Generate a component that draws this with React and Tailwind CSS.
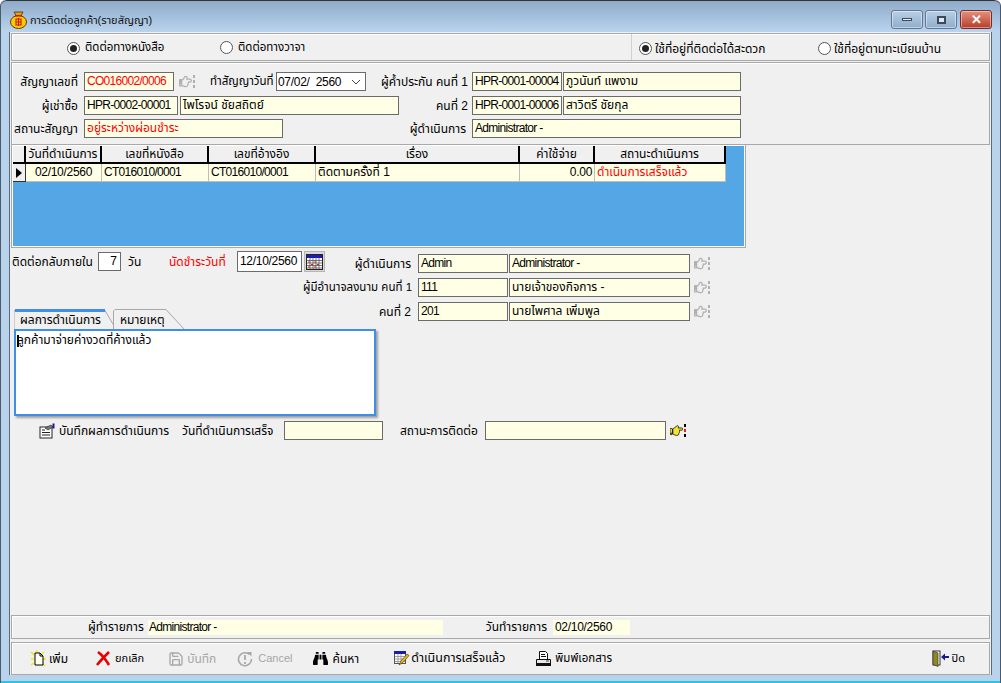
import { Save } from 'lucide-react'
import { FaBinoculars, FaRegHandPointRight, FaHandPointRight } from 'react-icons/fa'

const latinText = 'text-[12px] tracking-[-0.7px]'
const dateText = 'text-[12px] tracking-[-0.3px]'

function Field({ w, red, latin, className = '', children }) {
  return (
    <div
      className={`${w} h-[19px] shrink-0 border border-[#6b6b6b] bg-[#ffffe6] px-[2px] leading-[16px] whitespace-nowrap overflow-hidden ${
        latin ? latinText : 'text-[12px]'
      } ${red ? 'text-[#ff0000]' : 'text-black'} ${className}`}
    >
      {children}
    </div>
  )
}

function Label({ w, red, className = 'text-[12px]', children }) {
  return (
    <div className={`${w} shrink-0 text-right whitespace-nowrap ${red ? 'text-[#ff0000]' : 'text-black'} ${className}`}>
      {children}
    </div>
  )
}

function Radio({ on, className = '', children }) {
  return (
    <div className={`flex items-center whitespace-nowrap ${className}`}>
      <span className="w-[13px] h-[13px] rounded-full border border-[#555] bg-white flex items-center justify-center shrink-0">
        {on && <span className="w-[7px] h-[7px] rounded-full bg-[#222]" />}
      </span>
      {children}
    </div>
  )
}

function HandPick({ active, className = '' }) {
  return (
    <div className={`flex items-center shrink-0 ${className}`}>
      {active ? (
        <FaHandPointRight size={13} className="text-[#f2e23a] stroke-[30px] stroke-black" />
      ) : (
        <FaRegHandPointRight size={13} className="text-[#b0b0b0]" />
      )}
      <span className="flex flex-col gap-[2px] ml-[1px]">
        <i className={`block w-[2px] h-[3px] ${active ? 'bg-black' : 'bg-[#b0b0b0]'}`} />
        <i className={`block w-[2px] h-[3px] ${active ? 'bg-[#e02020]' : 'bg-[#b0b0b0]'}`} />
        <i className={`block w-[2px] h-[3px] ${active ? 'bg-black' : 'bg-[#b0b0b0]'}`} />
      </span>
    </div>
  )
}

function WinButton({ w, className = '', children }) {
  return (
    <div className={`${w} h-[19px] rounded-[3px] border border-[#5f7895] flex items-center justify-center shadow-[inset_0_0_0_1px_rgba(255,255,255,0.45)] ${className}`}>
      {children}
    </div>
  )
}

function ToolButton({ icon, disabled, gap = 'gap-[4px]', text = 'text-[12px]', className = '', children }) {
  return (
    <div className={`flex items-center ${gap} ${text} whitespace-nowrap ${disabled ? 'text-[#a6a6a6]' : 'text-black'} ${className}`}>
      {icon}
      {children}
    </div>
  )
}

function MoneyBag() {
  return (
    <svg width="17" height="18" viewBox="0 0 17 18" className="shrink-0">
      <path d="M4 1h9l-2 3.500H6z" fill="#d8a810" stroke="#5a2a00" strokeWidth="0.8" />
      <ellipse cx="8.500" cy="11" rx="8" ry="6.500" fill="#f5d000" stroke="#7a3000" />
      <rect x="5" y="4" width="7" height="1.600" fill="#c81e00" />
      <path d="M6 8h5v6H6zM8.500 7v8M5.500 11h6" fill="none" stroke="#d01800" strokeWidth="1.200" />
    </svg>
  )
}

function CalendarIcon() {
  return (
    <div className="w-[21px] h-[21px] bg-[#d8d8d8] border border-[#b5b5b5] flex items-center justify-center shrink-0 ml-[2px]">
      <svg width="17" height="16" viewBox="0 0 17 16">
        <rect x="0.500" y="0.500" width="16" height="15" fill="#fff" stroke="#222" />
        <rect x="1" y="1" width="15" height="3" fill="#1a1ac0" />
        <path d="M1 6.500h15M1 9h15M1 11.500h15M1 14h15M4 4v11M7 4v11M10 4v11M13 4v11" stroke="#555" strokeWidth="0.800" />
        <path d="M2 8h2M8 8h2M5 10.500h2M11 10.500h2M2 13h2M8 13h2" stroke="#e02020" strokeWidth="1.200" />
      </svg>
    </div>
  )
}

function NewFileIcon() {
  return (
    <svg width="17" height="17" viewBox="0 0 17 17" className="shrink-0">
      <path d="M1 2l3 3M1 9h3M1 15l3-2M7 0v3M14 2l-2 2M16 9h-3M13 14l2 2" stroke="#f5e600" strokeWidth="1.400" />
      <path d="M5 3h5l3 3v9H5z" fill="#fffff0" stroke="#000" />
      <path d="M10 3v3h3" fill="none" stroke="#000" />
    </svg>
  )
}

function RedX() {
  return (
    <svg width="15" height="15" viewBox="0 0 15 15" className="shrink-0">
      <path d="M2 1c4 3 8 8 11 13M13 1C9 5 5 9 1 14" fill="none" stroke="#e80000" strokeWidth="2.600" />
    </svg>
  )
}

function CancelIcon() {
  return (
    <svg width="16" height="16" viewBox="0 0 16 16" className="shrink-0">
      <path d="M12.500 3.500A6.500 6.500 0 1 0 14.500 8" fill="none" stroke="#a8a8a8" strokeWidth="1.600" />
      <path d="M10 1h4.500v4.500z" fill="#a8a8a8" />
      <path d="M8 4v5M8 11v2" stroke="#a8a8a8" strokeWidth="1.800" />
    </svg>
  )
}

function DoneIcon() {
  return (
    <svg width="17" height="17" viewBox="0 0 17 17" className="shrink-0">
      <rect x="1.500" y="1.500" width="11" height="12" fill="#fff" stroke="#555" />
      <rect x="1" y="1" width="12" height="3" fill="#1c1ca8" />
      <path d="M2 6.500h10M2 9h10M2 11.500h10M5 4v9M8 4v9" stroke="#8a8a8a" strokeWidth="0.800" />
      <path d="M6 15l2-4 6-7 2 1.500-6 7z" fill="#e8b820" stroke="#5a4000" strokeWidth="0.700" />
    </svg>
  )
}

function PrintIcon() {
  return (
    <svg width="17" height="17" viewBox="0 0 17 17" className="shrink-0">
      <path d="M4.500 1.500h6l2 2v6h-8z" fill="#fff" stroke="#111" />
      <path d="M6 4.500h4M6 6.500h5" stroke="#111" />
      <path d="M1.500 9.500h14v4h-14z" fill="#e8e8e8" stroke="#111" />
      <rect x="1" y="13" width="15" height="3" fill="#111" />
      <rect x="11" y="10.500" width="3" height="1" fill="#444" />
    </svg>
  )
}

function ExitIcon() {
  return (
    <svg width="18" height="17" viewBox="0 0 18 17" className="shrink-0">
      <rect x="1" y="1" width="7" height="14" fill="#fff" stroke="#333" />
      <path d="M1 1l5 2v13.500l-5-2z" fill="#8f8a20" stroke="#333" strokeWidth="0.700" />
      <path d="M17 6h-4V3.500L9 7l4 3.500V8h4z" fill="#1a1a90" />
    </svg>
  )
}

function RecordIcon() {
  return (
    <svg width="16" height="16" viewBox="0 0 16 16" className="shrink-0">
      <rect x="1" y="4" width="12" height="11" fill="#fff" stroke="#222" />
      <path d="M3 7h3M3 9.500h8M3 12h8" stroke="#222" />
      <path d="M6 5l6-3 2 2-5 3z" fill="#777" stroke="#222" strokeWidth="0.600" />
      <rect x="13.500" y="0.500" width="2" height="5" fill="#1a1a90" />
    </svg>
  )
}

const columns = [
  { w: 'w-[76px]', title: 'วันที่ดำเนินการ', value: '02/10/2560', cell: `text-center ${dateText}` },
  { w: 'w-[107px]', title: 'เลขที่หนังสือ', value: 'CT016010/0001', cell: latinText },
  { w: 'w-[107px]', title: 'เลขที่อ้างอิง', value: 'CT016010/0001', cell: latinText },
  { w: 'w-[204px]', title: 'เรื่อง', value: 'ติดตามครั้งที่ 1', cell: '' },
  { w: 'w-[75px]', title: 'ค่าใช้จ่าย', value: '0.00', cell: `text-right ${dateText}` },
  { w: 'w-[131px]', title: 'สถานะดำเนินการ', value: 'ดำเนินการเสร็จแล้ว', cell: 'text-[#ff0000]' },
]

export default function App() {
  return (
    <div className="w-[1001px] h-[683px] overflow-hidden flex flex-col font-['Liberation_Sans','Noto_Sans_Thai','Noto_Sans',sans-serif] text-[12px] text-black bg-[#b9d3ec] border-x border-[#4a5a6a] rounded-t-[6px]">
      {/* title bar */}
      <header className="h-[32px] shrink-0 flex items-start border-t border-[#333] rounded-t-[6px] bg-gradient-to-b from-[#8fabc9] to-[#bad4ee]">
        <div className="flex items-center gap-[3px] ml-[9px] mt-[10px]">
          <MoneyBag />
          <span className="text-[11px] text-[#111]">การติดต่อลูกค้า(รายสัญญา)</span>
        </div>
        <div className="ml-auto mr-[8px] mt-[9px] flex gap-[2px]">
          <WinButton w="w-[32px]" className="bg-gradient-to-b from-[#b9cfe5] to-[#8fadcc]">
            <span className="block w-[10px] h-[3px] bg-[#e8eef5] border border-[#3a4a5a]" />
          </WinButton>
          <WinButton w="w-[32px]" className="bg-gradient-to-b from-[#b9cfe5] to-[#8fadcc]">
            <span className="block w-[9px] h-[8px] bg-[#dfe8f1] border-2 border-[#3a4a5a]" />
          </WinButton>
          <WinButton w="w-[32px]" className="ml-[1px] border-[#7a2a20] bg-gradient-to-b from-[#e0917f] to-[#b83a28]">
            <span className="text-white font-bold text-[13px] leading-none">✕</span>
          </WinButton>
        </div>
      </header>

      {/* client area */}
      <main className="flex-1 min-h-0 flex flex-col mx-[8px] mb-[8px] border-l border-r border-[#5a6a7a] bg-[#f0f0f0] px-px pt-px">
        {/* contact type */}
        <div className="flex h-[28px] shrink-0 border border-[#a8a8a8] shadow-[inset_1px_1px_0_#fff]">
          <div className="w-[620px] flex items-center border-r border-[#d0d0d0] text-[11.5px]">
            <Radio on className="ml-[55px] mt-[2px]">
              <span className="ml-[5px] w-[76px]">ติดต่อทางหนังสือ</span>
            </Radio>
            <Radio className="ml-[59px] mt-[1px]">
              <span className="ml-[5px]">ติดต่อทางวาจา</span>
            </Radio>
          </div>
          <div className="flex-1 flex items-center">
            <Radio on className="ml-[7px] mt-[3px]">
              <span className="ml-[3px] w-[111px]">ใช้ที่อยู่ที่ติดต่อได้สะดวก</span>
            </Radio>
            <Radio className="ml-[52px] mt-[3px]">
              <span className="ml-[3px]">ใช้ที่อยู่ตามทะเบียนบ้าน</span>
            </Radio>
          </div>
        </div>

        {/* contract details */}
        <section className="h-[83px] shrink-0 mt-px border border-[#a8a8a8] shadow-[inset_1px_1px_0_#fff] pt-[9px] flex flex-col gap-[5px]">
          <div className="flex items-center">
            <Label w="w-[66px]">สัญญาเลขที่</Label>
            <Field w="w-[90px] ml-[6px]" red latin>CO016002/0006</Field>
            <HandPick className="ml-[5px]" />
            <Label w="w-[62px]" className="ml-[15px] text-[11.5px]">ทำสัญญาวันที่</Label>
            <div className="w-[90px] h-[19px] ml-[4px] border border-[#6b6b6b] bg-white flex items-center justify-between pl-[1px] pr-[4px] text-[12px] tracking-[-0.3px]">
              <span>07/02/&nbsp; 2560</span>
              <svg width="10" height="6" viewBox="0 0 10 6"><path d="M1 1l4 4 4-4" fill="none" stroke="#444" /></svg>
            </div>
            <Label w="w-[88px]" className="ml-[14px] text-[12px]">ผู้ค้ำประกัน คนที่ 1</Label>
            <Field w="w-[90px] ml-[4px]" latin>HPR-0001-00004</Field>
            <Field w="w-[178px] ml-px">ภูวนันท์ แพงาม</Field>
          </div>
          <div className="flex items-center">
            <Label w="w-[66px]">ผู้เช่าซื้อ</Label>
            <Field w="w-[94px] ml-[6px]" latin>HPR-0002-00001</Field>
            <Field w="w-[219px] ml-[2px]">ไพโรจน์ ชัยสถิตย์</Field>
            <Label w="w-[69px]">คนที่ 2</Label>
            <Field w="w-[90px] ml-[4px]" latin>HPR-0001-00006</Field>
            <Field w="w-[178px] ml-px">สาวิตรี ชัยกุล</Field>
          </div>
          <div className="flex items-center -mt-px">
            <Label w="w-[66px]">สถานะสัญญา</Label>
            <Field w="w-[199px] ml-[6px]" red>อยู่ระหว่างผ่อนชำระ</Field>
            <Label w="w-[183px]">ผู้ดำเนินการ</Label>
            <Field w="w-[269px] ml-[6px]" latin>Administrator -</Field>
          </div>
        </section>

        {/* follow-up grid */}
        <div className="w-[733px] h-[102px] shrink-0 ml-px border border-[#fff] outline outline-[#a8a8a8] bg-[#55a6e4]">
          <div className="flex h-[18px] bg-[#f0f0f0] w-[713px] border-b-2 border-black">
            <div className="w-[13px] border-r-2 border-black" />
            {columns.map((c) => (
              <div key={c.title} className={`${c.w} text-center border-r-2 border-black leading-[16px] whitespace-nowrap overflow-hidden`}>
                {c.title}
              </div>
            ))}
          </div>
          <div className="flex h-[18px] w-[713px]">
            <div className="w-[13px] bg-[#f0f0f0] border-r border-b border-[#333] flex items-center justify-center">
              <span className="w-0 h-0 border-y-[5px] border-y-transparent border-l-[6px] border-l-black" />
            </div>
            {columns.map((c) => (
              <div key={c.title} className={`${c.w} bg-[#ffffe6] border-r border-b border-[#bdbdbd] px-[2px] leading-[17px] whitespace-nowrap overflow-hidden ${c.cell}`}>
                {c.value}
              </div>
            ))}
          </div>
        </div>

        {/* left column and signer column share one grid cell */}
        <div className="grid shrink-0">
          <div className="col-start-1 row-start-1 flex flex-col pl-[1px]">
            <div className="flex items-center mt-[4px] h-[21px]">
              <span className="w-[79px] whitespace-nowrap">ติดต่อกลับภายใน</span>
              <div className="w-[23px] h-[19px] ml-[7px] border border-[#6b6b6b] bg-white text-right px-[3px] leading-[16px]">7</div>
              <span className="ml-[7px] w-[13px] whitespace-nowrap">วัน</span>
              <span className="ml-[28px] w-[59px] text-[#ff0000] whitespace-nowrap">นัดชำระวันที่</span>
              <div className={`w-[65px] h-[21px] ml-[9px] border border-[#6b6b6b] bg-white px-[2px] leading-[18px] ${dateText}`}>12/10/2560</div>
              <CalendarIcon />
            </div>

            {/* memo tabs */}
            <div className="mt-[37px] ml-[2px] w-[362px] flex items-end h-[20px]">
              <div className="relative w-[102px] h-[20px] pl-[6px] pt-[3px] leading-[17px] whitespace-nowrap">
                <svg className="absolute inset-0" width="102" height="20" viewBox="0 0 102 20">
                  <path d="M0 20V2L2 0H90L102 20" fill="#f0f0f0" stroke="#a8a8a8" />
                  <path d="M1 1.500H91" stroke="#3f8fe6" strokeWidth="3" />
                </svg>
                <span className="relative">ผลการดำเนินการ</span>
              </div>
              <div className="relative w-[72px] h-[20px] -ml-[3px] pl-[7px] pt-[3px] leading-[17px] whitespace-nowrap">
                <svg className="absolute inset-0" width="72" height="20" viewBox="0 0 72 20">
                  <path d="M0.500 20V2L2 0.500H53L71 20" fill="#f0f0f0" stroke="#a8a8a8" />
                </svg>
                <span className="relative">หมายเหตุ</span>
              </div>
            </div>
            <div className="ml-[2px] w-[362px] h-[87px] bg-white border-2 border-[#3f8fe6] shadow-[2px_2px_2px_#a0a0a0] px-px pt-[1px] leading-[16px]">
              <span className="inline-block w-[2px] h-[12px] -mr-[2px] bg-black align-middle" />
              ลูกค้ามาจ่ายค่างวดที่ค้างแล้ว
            </div>
          </div>

          <div className="col-start-1 row-start-1 flex flex-col items-end gap-[5px] pt-[7px] pr-[279px] pointer-events-none">
            <div className="flex items-center">
              <Label w="w-[90px]">ผู้ดำเนินการ</Label>
              <Field w="w-[90px] ml-[7px]" latin>Admin</Field>
              <Field w="w-[181px] ml-px" latin>Administrator -</Field>
              <HandPick className="ml-[4px] w-[17px]" />
            </div>
            <div className="flex items-center">
              <Label w="w-[108px]" className="text-[11.5px]">ผู้มีอำนาจลงนาม คนที่ 1</Label>
              <Field w="w-[90px] ml-[7px]" latin>111</Field>
              <Field w="w-[181px] ml-px">นายเจ้าของกิจการ -</Field>
              <HandPick className="ml-[4px] w-[17px]" />
            </div>
            <div className="flex items-center">
              <Label w="w-[40px]">คนที่ 2</Label>
              <Field w="w-[90px] ml-[7px]" latin>201</Field>
              <Field w="w-[181px] ml-px">นายไพศาล เพิ่มพูล</Field>
              <HandPick className="ml-[4px] w-[17px]" />
            </div>
          </div>
        </div>

        {/* record result */}
        <div className="flex items-center h-[19px] shrink-0 mt-[5px]">
          <div className="ml-[28px]"><RecordIcon /></div>
          <span className="ml-[4px] w-[111px] whitespace-nowrap">บันทึกผลการดำเนินการ</span>
          <span className="ml-[12px] w-[95px] whitespace-nowrap">วันที่ดำเนินการเสร็จ</span>
          <Field w="w-[99px] ml-[7px]" />
          <span className="ml-[17px] w-[75px] whitespace-nowrap">สถานะการติดต่อ</span>
          <Field w="w-[181px] ml-[10px]" />
          <HandPick active className="ml-[4px]" />
        </div>

        {/* audit strip */}
        <div className="mt-auto h-[24px] shrink-0 flex items-center border border-[#a8a8a8] shadow-[inset_1px_1px_0_#fff]">
          <Label w="w-[54px]" className="ml-[76px] text-[12px]">ผู้ทำรายการ</Label>
          <div className={`w-[295px] h-[15px] ml-[6px] bg-[#ffffe6] leading-[15px] px-px ${latinText}`}>Administrator -</div>
          <Label w="w-[63px]" className="ml-[41px] text-[12px]">วันทำรายการ</Label>
          <div className={`w-[77px] h-[15px] ml-[6px] bg-[#ffffe6] leading-[15px] px-[2px] ${dateText}`}>02/10/2560</div>
        </div>

        {/* toolbar */}
        <footer className="h-[33px] shrink-0 mt-[3px] flex items-center border border-[#a8a8a8] shadow-[inset_1px_1px_0_#fff]">
          <ToolButton icon={<NewFileIcon />} gap="gap-[2px]" className="ml-[18px]">เพิ่ม</ToolButton>
          <ToolButton icon={<RedX />} text="text-[11px]" className="ml-[28px]">ยกเลิก</ToolButton>
          <ToolButton icon={<Save size={16} className="text-[#a8a8a8]" />} disabled gap="gap-[3px]" className="ml-[24px]">บันทึก</ToolButton>
          <ToolButton icon={<CancelIcon />} disabled gap="gap-[5px]" text="text-[11px]" className="ml-[21px]">Cancel</ToolButton>
          <ToolButton icon={<FaBinoculars size={15} className="text-black" />} gap="gap-[5px]" className="ml-[20px]">ค้นหา</ToolButton>
          <ToolButton icon={<DoneIcon />} gap="gap-[1px]" text="text-[12.5px]" className="ml-[34px]">ดำเนินการเสร็จแล้ว</ToolButton>
          <ToolButton icon={<PrintIcon />} gap="gap-[3px]" text="text-[11.5px]" className="ml-[30px]">พิมพ์เอกสาร</ToolButton>
          <ToolButton icon={<ExitIcon />} gap="gap-[2px]" text="text-[11px]" className="ml-auto mr-[24px]">ปิด</ToolButton>
        </footer>
      </main>
      <div className="h-[2px] shrink-0 mt-[-2px] bg-[#2bc4e8]" />
    </div>
  )
}
